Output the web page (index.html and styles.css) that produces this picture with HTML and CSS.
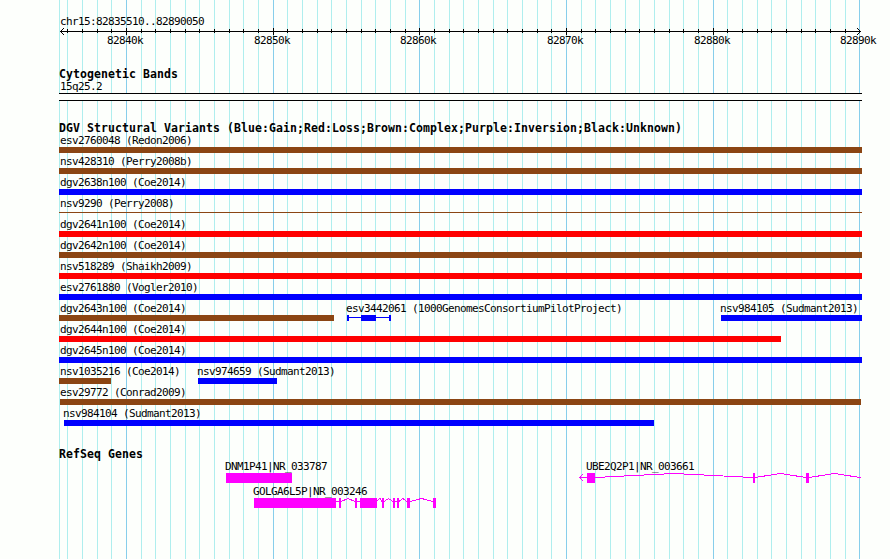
FILE: index.html
```
<!DOCTYPE html>
<html lang="en">
<head>
<meta charset="utf-8">
<title>chr15:82835510..82890050</title>
<link rel="stylesheet" href="styles.css">
</head>
<body>
<main class="browser">
<svg class="gridlines" width="890" height="559" aria-hidden="true">
<path class="minor" d="M59.5 0V559M67.5 0V559M82.5 0V559M97.5 0V559M111.5 0V559M141.5 0V559M155.5 0V559M170.5 0V559M185.5 0V559M199.5 0V559M214.5 0V559M229.5 0V559M243.5 0V559M258.5 0V559M287.5 0V559M302.5 0V559M317.5 0V559M331.5 0V559M346.5 0V559M361.5 0V559M375.5 0V559M390.5 0V559M405.5 0V559M434.5 0V559M449.5 0V559M463.5 0V559M478.5 0V559M493.5 0V559M507.5 0V559M522.5 0V559M537.5 0V559M551.5 0V559M581.5 0V559M595.5 0V559M610.5 0V559M625.5 0V559M639.5 0V559M654.5 0V559M669.5 0V559M683.5 0V559M698.5 0V559M727.5 0V559M742.5 0V559M757.5 0V559M771.5 0V559M786.5 0V559M801.5 0V559M815.5 0V559M830.5 0V559M845.5 0V559"/>
<path class="major" d="M126.5 0V559M273.5 0V559M419.5 0V559M566.5 0V559M713.5 0V559M859.5 0V559"/>
</svg>
<section class="ruler">
<svg width="890" height="52">
<text x="60" y="25">chr15:82835510..82890050</text>
<path class="axis" d="M60 31.5H861M64 28L60.5 31.5L64 35M857 28L860.5 31.5L857 35"/>
<path class="axis" d="M67.5 29V33M82.5 29V33M97.5 29V33M111.5 29V33M141.5 29V33M155.5 29V33M170.5 29V33M185.5 29V33M199.5 29V33M214.5 29V33M229.5 29V33M243.5 29V33M258.5 29V33M287.5 29V33M302.5 29V33M317.5 29V33M331.5 29V33M346.5 29V33M361.5 29V33M375.5 29V33M390.5 29V33M405.5 29V33M434.5 29V33M449.5 29V33M463.5 29V33M478.5 29V33M493.5 29V33M507.5 29V33M522.5 29V33M537.5 29V33M551.5 29V33M581.5 29V33M595.5 29V33M610.5 29V33M625.5 29V33M639.5 29V33M654.5 29V33M669.5 29V33M683.5 29V33M698.5 29V33M727.5 29V33M742.5 29V33M757.5 29V33M771.5 29V33M786.5 29V33M801.5 29V33M815.5 29V33M830.5 29V33M845.5 29V33"/>
<path class="axis" d="M126.5 28V35M273.5 28V35M419.5 28V35M566.5 28V35M713.5 28V35"/>
<text x="107" y="44">82840k</text><text x="254" y="44">82850k</text><text x="400" y="44">82860k</text><text x="547" y="44">82870k</text><text x="694" y="44">82880k</text><text x="840" y="44">82890k</text>
</svg>
</section>
<section class="track cytobands">
<h2>Cytogenetic Bands</h2>
<svg width="890" height="21"><text x="60" y="10">15q25.2</text><rect class="band" x="59" y="14" width="803" height="6"/><path class="axis" d="M59 13.5H862M59 20.5H862"/></svg>
</section>
<section class="track variants">
<h2>DGV Structural Variants (Blue:Gain;Red:Loss;Brown:Complex;Purple:Inversion;Black:Unknown)</h2>
<svg width="890" height="21"><text x="60" y="10">esv2760048 (Redon2006)</text><rect class="complex" x="59" y="13" width="803" height="6"/></svg>
<svg width="890" height="21"><text x="60" y="10">nsv428310 (Perry2008b)</text><rect class="complex" x="59" y="13" width="803" height="6"/></svg>
<svg width="890" height="21"><text x="60" y="10">dgv2638n100 (Coe2014)</text><rect class="gain" x="59" y="13" width="803" height="6"/></svg>
<svg width="890" height="21"><text x="60" y="10">nsv9290 (Perry2008)</text><rect class="complex" x="59" y="15" width="803" height="1"/></svg>
<svg width="890" height="21"><text x="60" y="10">dgv2641n100 (Coe2014)</text><rect class="loss" x="59" y="13" width="803" height="6"/></svg>
<svg width="890" height="21"><text x="60" y="10">dgv2642n100 (Coe2014)</text><rect class="complex" x="59" y="13" width="803" height="6"/></svg>
<svg width="890" height="21"><text x="60" y="10">nsv518289 (Shaikh2009)</text><rect class="loss" x="59" y="13" width="803" height="6"/></svg>
<svg width="890" height="21"><text x="60" y="10">esv2761880 (Vogler2010)</text><rect class="gain" x="59" y="13" width="803" height="6"/></svg>
<svg width="890" height="21"><text x="60" y="10">dgv2643n100 (Coe2014)</text><rect class="complex" x="59" y="13" width="275" height="6"/><text x="346" y="10">esv3442061 (1000GenomesConsortiumPilotProject)</text><path class="gain" d="M347 13h2v6h-2zM349 15h40v1h-40zM361 13h15v6h-15zM389 13h2v6h-2z"/><text x="720" y="10">nsv984105 (Sudmant2013)</text><rect class="gain" x="721" y="13" width="141" height="6"/></svg>
<svg width="890" height="21"><text x="60" y="10">dgv2644n100 (Coe2014)</text><rect class="loss" x="59" y="13" width="722" height="6"/></svg>
<svg width="890" height="21"><text x="60" y="10">dgv2645n100 (Coe2014)</text><rect class="gain" x="59" y="13" width="803" height="6"/></svg>
<svg width="890" height="21"><text x="60" y="10">nsv1035216 (Coe2014)</text><rect class="complex" x="59" y="13" width="52" height="6"/><text x="197" y="10">nsv974659 (Sudmant2013)</text><rect class="gain" x="198" y="13" width="79" height="6"/></svg>
<svg width="890" height="21"><text x="60" y="10">esv29772 (Conrad2009)</text><rect class="complex" x="60" y="13" width="801" height="6"/></svg>
<svg width="890" height="21"><text x="63" y="10">nsv984104 (Sudmant2013)</text><rect class="gain" x="64" y="13" width="590" height="6"/></svg>
</section>
<section class="track genes">
<h2>RefSeq Genes</h2>
<svg width="890" height="25">
<text x="225" y="10">DNM1P41|NR_033787</text>
<rect class="exon" x="226" y="13" width="66" height="10"/>
<text x="586" y="10">UBE2Q2P1|NR_003661</text>
<path class="intron" d="M587 17.5H579.5M583 14L579.5 17.5L583 21M595 17.5L674 13.5L753 17.5M755 17.5L780.5 13.5L806 17.5M809 17.5L834.5 13.5L860 17.5H861"/>
<path class="exon" d="M587 13h8v10h-8zM753 13h2v10h-2zM806 13h3v10h-3z"/>
</svg>
<svg width="890" height="25">
<text x="253" y="10">GOLGA6L5P|NR_003246</text>
<path class="intron" d="M336 16.5H339M341 16.5L348 13.5L355 16.5M357 16.5H360M377 15.5L380 13.5L382 16.5M384 16.5L388.5 13.5L393 16.5M395 16.5H397M399 16.5L403 13.5L407 16.5M410 16.5L421.5 13.5L433 16.5"/>
<path class="exon" d="M254 13h82v10h-82zM339 13h2v10h-2zM355 13h2v10h-2zM360 13h17v10h-17zM382 13h2v10h-2zM393 13h2v10h-2zM397 13h2v10h-2zM407 13h3v10h-3zM433 13h3v10h-3z"/>
</svg>
</section>
</main>
</body>
</html>
```
FILE: styles.css
```
body {
  margin: 0;
  background: #fdfffc;
  color: #000;
}

.browser {
  position: relative;
  width: 890px;
  height: 559px;
  overflow: hidden;
  font-family: "DejaVu Sans Mono", "Liberation Mono", monospace;
}

svg {
  display: block;
  shape-rendering: crispEdges;
}

.gridlines {
  position: absolute;
  inset: 0;
}

.ruler,
.track {
  position: relative;
}

.cytobands {
  margin-top: 16px;
}

.variants {
  margin-top: 21px;
}

.genes {
  margin-top: 20px;
}

h2 {
  margin: 0 0 0 59px;
  height: 12px;
  line-height: 13px;
  font-size: 11.5px;
  font-weight: bold;
  letter-spacing: 0.077px;
  white-space: nowrap;
}

text {
  font-size: 11px;
  letter-spacing: -0.622px;
  fill: #000;
}

.minor {
  stroke: #afeeee;
}

.major {
  stroke: #87ceeb;
}

.axis {
  stroke: #000;
  fill: none;
}

.band {
  fill: #fdfffc;
}

.gain {
  fill: #00f;
}

.loss {
  fill: #f00;
}

.complex {
  fill: #8b4513;
}

.exon {
  fill: #f0f;
}

.intron {
  stroke: #f0f;
  fill: none;
}
```
